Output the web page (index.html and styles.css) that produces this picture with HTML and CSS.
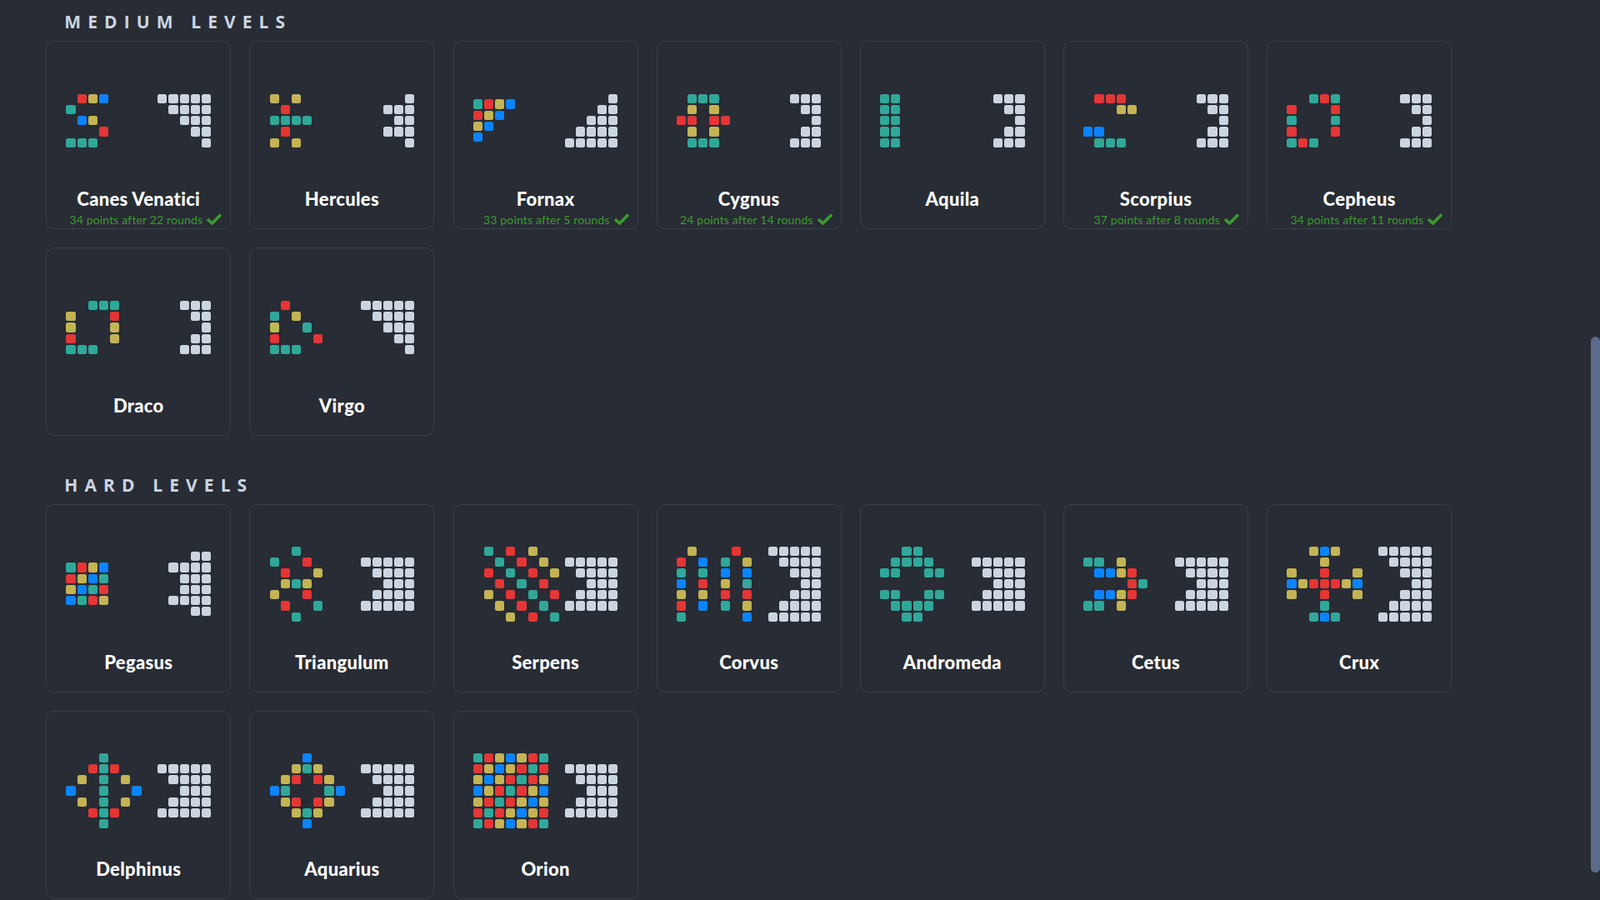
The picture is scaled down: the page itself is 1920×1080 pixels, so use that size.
FILE: index.html
```html
<!DOCTYPE html>
<html lang="en">
<head>
  <meta charset="UTF-8" />
  <meta name="viewport" content="width=device-width, initial-scale=1.0"/>
  <title>Levels</title>
  <link rel="stylesheet" href="styles.css">
</head>
<body>

  <main>
    <section class="level-group">
      <h2>Medium levels</h2>
      <div class="levels" id="medium"></div>
    </section>

    <section class="level-group">
      <h2>Hard levels</h2>
      <div class="levels" id="hard"></div>
    </section>
  </main>

  <div class="scroll-thumb"></div>

  <script src="script.js"></script>
</body>
</html>
```

FILE: styles.css
```css
html, body {
  height: 100%;
  overflow: hidden;
}

body {
  margin: 0;
  padding: 0;
  background: #282c34;
  font-family: "Open Sans", Arial, sans-serif;
}

main {
  padding: 11.7px 0 0 55.3px;
}

.level-group + .level-group {
  margin-top: 44.2px;
}

h2 {
  margin: 0 0 9.6px 22px;
  color: #cbd5e0;
  font-size: 21px;
  font-weight: 700;
  line-height: 28px;
  letter-spacing: 8.1px;
  text-transform: uppercase;
}

.levels {
  display: grid;
  grid-template-columns: repeat(7, 221.9px);
  column-gap: 22.27px;
  row-gap: 22.2px;
}

.level {
  box-sizing: border-box;
  height: 226px;
  padding-top: 9.5px;
  border: 1px solid #3a3f4b;
  border-radius: 10px;
}

.board {
  display: flex;
  justify-content: space-between;
  align-items: center;
  height: 170px;
  margin: 0 22.2px;
}

.row {
  display: flex;
}

.cell {
  width: 11.17px;
  height: 11.17px;
  margin: 1px;
  border-radius: 2.5px;
}

.t { background: #2fa899; }
.r { background: #e53535; }
.y { background: #c4b454; }
.b { background: #0a84ff; }
.w { background: #cbd5e0; }

.name {
  margin-top: -1.2px;
  color: #fff;
  font-family: Lato, Arial, sans-serif;
  font-size: 22px;
  font-weight: 900;
  line-height: 20px;
  letter-spacing: 0.3px;
  text-align: center;
}

.result {
  display: flex;
  justify-content: flex-end;
  align-items: center;
  gap: 5px;
  height: 16px;
  margin-top: 6.7px;
  padding-right: 10px;
  color: #3c9a2e;
  font-family: Lato, Arial, sans-serif;
  font-size: 14px;
  letter-spacing: 0.15px;
}

.result svg {
  width: 18px;
  height: 14px;
}

.scroll-thumb {
  position: fixed;
  top: 404px;
  right: 0;
  width: 11px;
  height: 643px;
  border-radius: 6px;
  background: #5b6b8a;
}
```

FILE: script.js
```js
const TRI = ['WWWWW', '.WWWW', '..WWW', '...WW', '....W'];
const NOTCH = ['WWW', '.WW', '..W', '.WW', 'WWW'];
const ARROW = ['WWWWW', '.WWWW', '..WWW', '.WWWW', 'WWWWW'];
const ARROW7 = ['WWWWW', '.WWWW', '..WWW', '...WW', '..WWW', '.WWWW', 'WWWWW'];

const medium = [
  { name: 'Canes Venatici', score: '34 points after 22 rounds',
    board: ['.RYB', 'T...', '.BY.', '...R', 'TTT.'], target: TRI },
  { name: 'Hercules',
    board: ['Y.Y.', '.R..', 'TTTT', '.R..', 'Y.Y.'], target: ['..W', 'WWW', '.WW', 'WWW', '..W'] },
  { name: 'Fornax', score: '33 points after 5 rounds',
    board: ['TRYB', 'RYB.', 'YB..', 'B...'], target: ['....W', '...WW', '..WWW', '.WWWW', 'WWWWW'] },
  { name: 'Cygnus', score: '24 points after 14 rounds',
    board: ['.TTT.', '.Y.Y.', 'RR.RR', '.Y.Y.', '.TTT.'], target: NOTCH },
  { name: 'Aquila',
    board: ['TT', 'TT', 'TT', 'TT', 'TT'], target: NOTCH },
  { name: 'Scorpius', score: '37 points after 8 rounds',
    board: ['.RRR.', '...YY', '.....', 'BB...', '.TTT.'], target: NOTCH },
  { name: 'Cepheus', score: '34 points after 11 rounds',
    board: ['..TRT', 'R...R', 'T...T', 'R...R', 'TRT..'], target: NOTCH },
  { name: 'Draco',
    board: ['..TTT', 'Y...R', 'Y...Y', 'R...Y', 'TTT..'], target: NOTCH },
  { name: 'Virgo',
    board: ['.R...', 'T.Y..', 'Y..T.', 'R...R', 'TTT..'], target: TRI }
];

const hard = [
  { name: 'Pegasus',
    board: ['TRYB', 'RYBT', 'YBTR', 'BTRY'], target: ['..WW', 'WWWW', '.WWW', '.WWW', 'WWWW', '..WW'] },
  { name: 'Triangulum',
    board: ['..T..', 'T..R.', '.R..Y', '.YTY.', 'Y..R.', '.R..T', '..T..'], target: ARROW },
  { name: 'Serpens',
    board: ['.T.R.Y..', '..T.R.Y.', '.R.T.R.Y', '..R.T.R.', '.Y.R.T.R', '..Y.R.T.', '...Y.R.T'], target: ARROW },
  { name: 'Corvus',
    board: ['.Y...R.', 'R.B.T.Y', 'T.T.B.B', 'B.R.Y.T', 'Y.Y.R.R', 'R.B.T.Y', 'T.....B'], target: ARROW7 },
  { name: 'Andromeda',
    board: ['..TT..', '.TTTT.', 'TT..TT', '......', 'TT..TT', '.TTTT.', '..TT..'], target: ARROW },
  { name: 'Cetus',
    board: ['TT.Y..', '.BBYR.', '....RT', '.BBYR.', 'TT.Y..'], target: ARROW },
  { name: 'Crux',
    board: ['..YBY..', '...Y...', 'Y..R..Y', 'BYRRRYB', 'Y..R..Y', '...T...', '..TBT..'], target: ARROW7 },
  { name: 'Delphinus',
    board: ['...T...', '..RTR..', '.Y.T.Y.', 'B..T..B', '.Y.T.Y.', '..RTR..', '...T...'], target: ARROW },
  { name: 'Aquarius',
    board: ['...B...', '..YTY..', '.YR.RY.', 'BT...TB', '.YR.RY.', '..YTY..', '...B...'], target: ARROW },
  { name: 'Orion',
    board: ['TRYBYRT', 'RYBYRTR', 'YBYRTRY', 'BYRTRYB', 'YRTRYBY', 'RTRYBYR', 'TRYBYRT'], target: ARROW }
];

const CHECK = '<svg viewBox="0 0 18 14"><path d="M1 7 L6.5 12 L17 1.5" fill="none" stroke="currentColor" stroke-width="3.6"/></svg>';

function renderGrid(rows) {
  const html = rows.map(row => {
    const cells = [...row].map(c =>
      c === '.' ? '<span class="cell"></span>' : `<span class="cell ${c.toLowerCase()}"></span>`
    );
    return `<div class="row">${cells.join('')}</div>`;
  });
  return `<div class="grid">${html.join('')}</div>`;
}

function renderLevel(level) {
  const result = level.score ? `<div class="result">${level.score} ${CHECK}</div>` : '';
  return `
    <article class="level">
      <div class="board">${renderGrid(level.board)}${renderGrid(level.target)}</div>
      <div class="name">${level.name}</div>
      ${result}
    </article>`;
}

document.getElementById('medium').innerHTML = medium.map(renderLevel).join('');
document.getElementById('hard').innerHTML = hard.map(renderLevel).join('');
```
